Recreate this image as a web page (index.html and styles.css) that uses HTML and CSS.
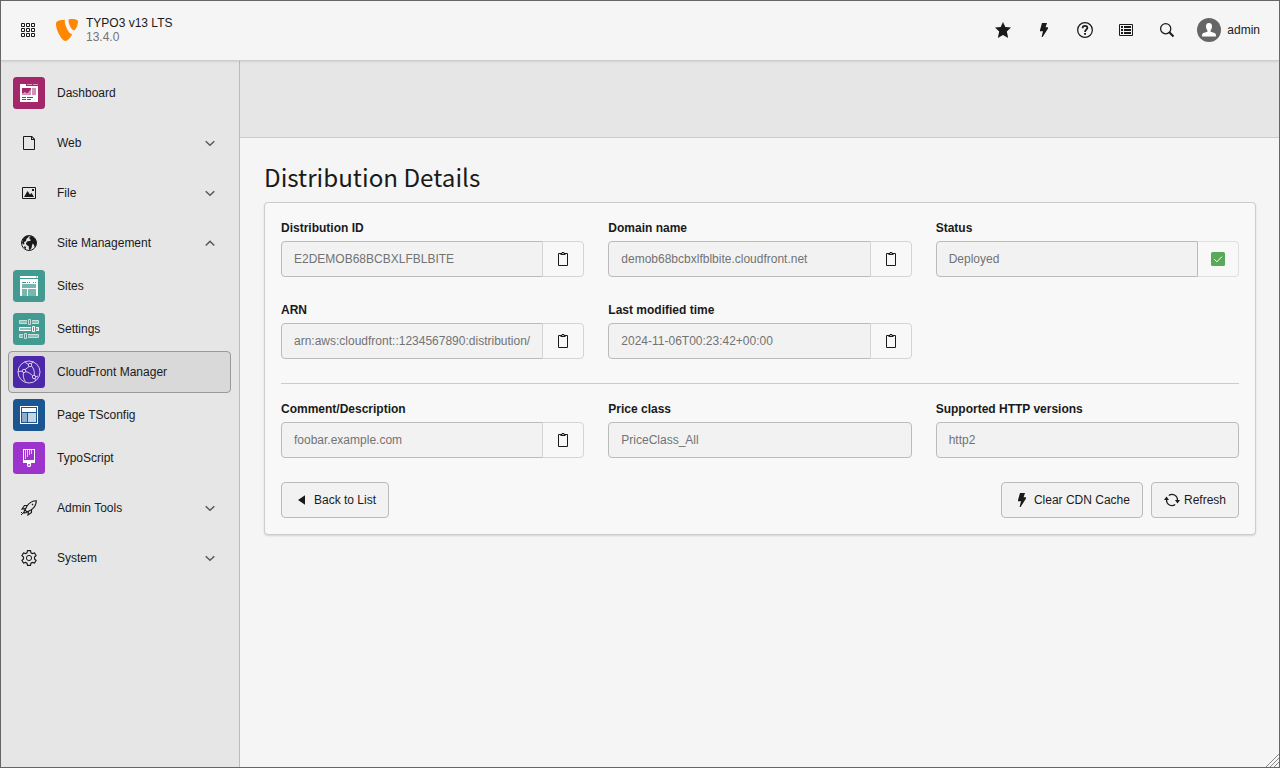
FILE: index.html
```html
<!DOCTYPE html>
<html lang="en">
<head>
<meta charset="utf-8">
<title>CloudFront Manager - TYPO3</title>
<link rel="stylesheet" href="styles.css">
</head>
<body>
<svg width="0" height="0" class="defs">
  <symbol id="down" viewBox="0 0 16 16"><path d="M3.700 6.200 8 10.300 12.300 6.200" fill="none" stroke="#5a5a5a" stroke-width="1.500"/></symbol>
  <symbol id="up" viewBox="0 0 16 16"><path d="M3.700 10.500 8 6.400 12.300 10.500" fill="none" stroke="#5a5a5a" stroke-width="1.500"/></symbol>
  <symbol id="bolt" viewBox="0 0 16 16"><path d="M6 1H11L9.600 5.200H12V6.400L6.600 15H5.600L7 9.200H4V8z"/></symbol>
  <symbol id="clip" viewBox="0 0 16 16"><path d="M3.500 2.500h9v12h-9z" fill="none" stroke="#1a1a1a"/><path d="M5 2h1.500L7 1h2l.5 1H11v1l-1 1H6L5 3z"/><path d="M7 2h2v1H7z" fill="#aaa"/></symbol>
</svg>
<div class="app">
  <header class="topbar">
    <svg class="grid-icon" viewBox="0 0 14 14" fill="none" stroke="#1a1a1a"><path d="M.5.5h3v3h-3zM5.500.5h3v3h-3zM10.500.5h3v3h-3zM.5 5.500h3v3h-3zM5.500 5.500h3v3h-3zM10.500 5.500h3v3h-3zM.5 10.500h3v3h-3zM5.500 10.500h3v3h-3zM10.500 10.500h3v3h-3z"/></svg>
    <svg class="logo" viewBox="2.1 1.8 12.1 12.6" preserveAspectRatio="none" fill="#ff8700"><path d="M11.100 10.300c-.2 0-.3.1-.5.1-1.500 0-3.700-5.300-3.700-7.100 0-.6.2-.9.3-1-1.900.1-4.100.4-4.800 1.200-.2.2-.3.8-.3 1.500 0 2.800 3 9.400 5.200 9.400 1 0 2.700-1.600 3.800-4.100zM10.200 1.800c2 0 4 .3 4 1.400 0 2.300-1.500 5.100-2.200 5.100-1.300 0-3-3.700-3-5.500 0-.8.3-1 1.200-1"/></svg>
    <div class="site"><span>TYPO3 v13 LTS</span><span class="version">13.4.0</span></div>
    <div class="tools">
      <svg class="icon" viewBox="0 0 16 16"><path d="m8 0 2.300 5.100L16 5.600l-4.200 4L13.200 16 8 13 2.800 16 4.200 9.600 0 5.600l5.700-.5z"/></svg>
      <svg class="icon"><use href="#bolt"/></svg>
      <svg class="icon" viewBox="0 0 16 16"><circle cx="8" cy="8" r="7.350" fill="none" stroke="#1a1a1a" stroke-width="1.250"/><path d="M5.600 6.200C5.600 4.600 6.600 3.900 8 3.900s2.400.8 2.400 2.100C10.400 7.500 8 7.600 8 9.900" fill="none" stroke="#1a1a1a" stroke-width="1.700"/><path d="M7.100 11h1.900v1.800H7.100z"/></svg>
      <svg class="icon" viewBox="0 0 16 16"><path d="M1.500 2.500h13v11h-13z" fill="none" stroke="#1a1a1a"/><path d="M3 4h2v2H3zM6 4h7v2H6zM3 7h2v2H3zM6 7h7v2H6zM3 10h2v2H3zM6 10h7v2H6z"/></svg>
      <svg class="icon" viewBox="0 0 16 16"><circle cx="6.700" cy="6.700" r="5.100" fill="none" stroke="#1a1a1a" stroke-width="1.250"/><path d="m10.300 10.300 4.200 4.200" stroke="#1a1a1a" stroke-width="2"/></svg>
      <div class="user">
        <svg class="avatar" viewBox="0 0 24 24"><circle cx="12" cy="12" r="12" fill="#666"/><path d="M12 5c2.200 0 3.200 1.500 3 3.600-.1 1.600-.6 2.900-1.400 3.600v1.500l4 1.400c1 .4 1.400 1.200 1.400 3.400H5c0-2.200.4-3 1.400-3.400l4-1.400v-1.500C9.600 11.500 9.100 10.200 9 8.600 8.800 6.500 9.800 5 12 5z" fill="#fff"/></svg>
        <span>admin</span>
      </div>
    </div>
  </header>
  <div class="body">
    <nav class="menu">
      <a class="item"><svg class="module" viewBox="0 0 32 32"><rect width="32" height="32" rx="3.500" fill="#a4276a"/><path d="M7 7h6v2h12v16H7z" fill="#fff"/><path d="M14 7h5v1h-5zM20 7h5v1h-5z" fill="#d99bbd"/><path d="M9 11h9v2l-3 3h-2l-1-.8-3 2zM9 20h4v1H9zM14 20h6v1h-6zM9 22h4v1H9zM14 22h4v1h-4z" fill="#a4276a"/><path d="M18 12v6H9v-1.500l3-1.300 1 .8h2zM19 11h4v7h-4z" fill="#d48fb5"/></svg><span>Dashboard</span></a>
      <a class="item group"><span class="slot"><svg class="icon" viewBox="0 0 16 16"><path d="M2.500 1.500h8l3 3v10h-11z" fill="none" stroke="#1a1a1a"/><path d="M10 1h1l3 3v1h-4z"/><path d="M11 2.500V4h1.500z" fill="#e6e6e6"/></svg></span><span>Web</span><svg class="icon chevron"><use href="#down"/></svg></a>
      <a class="item group"><span class="slot"><svg class="icon" viewBox="0 0 16 16"><path d="M1.500 2.500h13v11h-13z" fill="none" stroke="#1a1a1a"/><path d="m3 12 3.500-6L9 9.500 10.500 8 13 12zM11 4h2v2h-2z"/></svg></span><span>File</span><svg class="icon chevron"><use href="#down"/></svg></a>
      <a class="item group"><span class="slot"><svg class="icon" viewBox="0 0 16 16"><circle cx="8" cy="8" r="7.500" fill="none" stroke="#1a1a1a"/><path d="M2 3.500 5 1h3L7.200 2.500 5.500 3.800 5 6 3 7.300 3.500 9 2.500 9.500 1 8zM8.500 1.500 11 1l3 2.500L15.500 7l-.7 3.500-1.300 1.500-.8-2.500-1-1L11 10.500 10.500 13 9 15 8 14.500 7.700 11 5.500 10 5 8 6.500 6.300 9 6l1-1-1.500-1zM3.500 11l1.500 1v2L3 12.500z"/></svg></span><span>Site Management</span><svg class="icon chevron"><use href="#up"/></svg></a>
      <a class="item"><svg class="module" viewBox="0 0 32 32"><rect width="32" height="32" rx="3.500" fill="#439a90"/><path d="M7 6h18v2H7zM7 9h18v17H7z" fill="#fff"/><path d="M23 6.500h1v1h-1zM9 12h4v1H9zM14 12h1v1h-1zM16 12h1v1h-1zM20 12h1v1h-1zM22 12h1v1h-1z" fill="#439a90"/><path d="M9 14h14v4H9zM9 19h5v7H9zM15 19h8v7h-8z" fill="#78b7b0"/></svg><span>Sites</span></a>
      <a class="item"><svg class="module" viewBox="0 0 32 32"><rect width="32" height="32" rx="3.500" fill="#439a90"/><g fill="#8ec3bd" stroke="#c5dfdc"><path d="M6.500 7.500h19v3h-19zM6.500 21.500h19v3h-19z"/></g><path d="M6.500 14.500h19v3h-19z" fill="#8ec3bd" stroke="#fff"/><g fill="#439a90"><path d="M14 6h5v6h-5zM18 13h5v6h-5zM10 20h5v6h-5z"/></g><path d="M15.500 6.500h2v5h-2zM11.500 20.500h2v5h-2z" fill="none" stroke="#c5dfdc"/><path d="M19.500 13.500h2v5h-2z" fill="none" stroke="#fff"/></svg><span>Settings</span></a>
      <a class="item active"><svg class="module" viewBox="0 0 32 32"><rect width="32" height="32" rx="3.500" fill="#4d27aa"/><g fill="none" stroke="#e4ddf4" stroke-width=".9"><circle cx="16" cy="16" r="11"/><circle cx="17" cy="9" r="1.700"/><circle cx="11" cy="15" r="1.700"/><circle cx="21" cy="21" r="1.700"/><path d="M16 10.500 12 13.700M18.500 10c2.500 2.500 3.200 6 2.700 9.300M12.700 15.500c3 .8 5 2.300 7 4.300M10.500 16.700c-.8 3 .1 6 1.800 9M5 15.300h4.300M15.500 8.500 11.500 6M18 7.500 20.500 6M22 22.500l.5 2M22.700 21l2.300-1"/></g></svg><span>CloudFront Manager</span></a>
      <a class="item"><svg class="module" viewBox="0 0 32 32"><rect width="32" height="32" rx="3.500" fill="#1b5690"/><path d="M7 7h18v18H7z" fill="#fff"/><path d="M8 8h16v16H8z" fill="#1b5690"/><path d="M9 9h14v4H9z" fill="#fff"/><path d="M9 14h5v9H9z" fill="#8fadca"/><path d="M15 14h8v9h-8z" fill="#c6d5e4"/></svg><span>Page TSconfig</span></a>
      <a class="item"><svg class="module" viewBox="0 0 32 32"><rect width="32" height="32" rx="3.500" fill="#9b33cc"/><path d="M10 7h12v14h-4v3l-1 1h-2l-1-1v-3h-4z" fill="#fff"/><path d="M11 8h10v10H11zM15.200 22h1.600v1.800h-1.600z" fill="#9b33cc"/><path d="M12 8h1v9h-1zM14 8h1v7h-1zM16 8h1v5h-1zM18 8h1v4h-1z" fill="#e5c8f2"/></svg><span>TypoScript</span></a>
      <a class="item group"><span class="slot"><svg class="icon" viewBox="0 0 16 16" fill="none" stroke="#1a1a1a"><path stroke-width="1.150" d="M15.300.7C11 .7 8.500 2.500 6 6L4 10l2 2 4-2c3.500-2.500 5.300-5 5.300-9.300zM6 5.500H3.500L1 9l3.200-.4M10.500 10v2.500L7 15l.4-3.200M3.500 10 3 13l3-.5M11 4l1 1"/><path d="M0 12.500h1M1 13.500h1M0 14.500h1M2 12.500h1"/></svg></span><span>Admin Tools</span><svg class="icon chevron"><use href="#down"/></svg></a>
      <a class="item group"><span class="slot"><svg class="icon" viewBox="0 0 16 16" fill="none" stroke="#1a1a1a"><path stroke-width="1.150" d="M6.500.600h3l.5 2.200 1.300.8 2.200-.7 1.600 2.700-1.600 1.500v1.800l1.600 1.500-1.600 2.700-2.200-.7-1.300.8-.5 2.200h-3L6 13.200l-1.300-.8-2.200.7L.900 10.400l1.600-1.500V7.100L.900 5.600l1.600-2.700 2.200.7L6 2.800z"/><circle cx="8" cy="8" r="2.600"/></svg></span><span>System</span><svg class="icon chevron"><use href="#down"/></svg></a>
    </nav>
    <main class="content">
      <div class="docheader"></div>
      <section class="module-body">
        <h1>Distribution Details</h1>
        <div class="card">
          <div class="fields">
            <div><label>Distribution ID</label><div class="field"><div class="input">E2DEMOB68BCBXLFBLBITE</div><div class="addon"><svg class="icon"><use href="#clip"/></svg></div></div></div>
            <div><label>Domain name</label><div class="field"><div class="input">demob68bcbxlfblbite.cloudfront.net</div><div class="addon"><svg class="icon"><use href="#clip"/></svg></div></div></div>
            <div><label>Status</label><div class="field"><div class="input">Deployed</div><div class="addon status"><svg class="icon" viewBox="0 0 16 16"><rect x="1" y="1" width="14" height="14" rx="1.500" fill="#59a959"/><path d="m4.300 8.300 2.600 2.500 5-5.200" fill="none" stroke="#fff"/></svg></div></div></div>
            <div><label>ARN</label><div class="field"><div class="input">arn:aws:cloudfront::1234567890:distribution/</div><div class="addon"><svg class="icon"><use href="#clip"/></svg></div></div></div>
            <div><label>Last modified time</label><div class="field"><div class="input">2024-11-06T00:23:42+00:00</div><div class="addon"><svg class="icon"><use href="#clip"/></svg></div></div></div>
          </div>
          <div class="fields second">
            <div><label>Comment/Description</label><div class="field"><div class="input">foobar.example.com</div><div class="addon"><svg class="icon"><use href="#clip"/></svg></div></div></div>
            <div><label>Price class</label><div class="field"><div class="input">PriceClass_All</div></div></div>
            <div><label>Supported HTTP versions</label><div class="field"><div class="input">http2</div></div></div>
          </div>
          <div class="actions">
            <button class="back"><svg class="icon" viewBox="0 0 16 16"><path d="M11 3.200v9.600L4 8z"/></svg>Back to List</button>
            <button><svg class="icon"><use href="#bolt"/></svg>Clear CDN Cache</button>
            <button><svg class="icon" viewBox="0 0 16 16"><path d="M4.800 3.500A5.500 5.500 0 0 1 13.500 8M11.200 12.500A5.500 5.500 0 0 1 2.500 8" fill="none" stroke="#1a1a1a" stroke-width="1.200"/><path d="M11 8h5l-2.500 3.500zM0 8h5L2.500 4.500z"/></svg>Refresh</button>
          </div>
        </div>
      </section>
    </main>
  </div>
  <svg class="resizer" viewBox="0 0 13 13" fill="none" stroke="#888"><path d="M0 13 13 0M4 13l9-9M8 13l5-5"/></svg>
</div>
</body>
</html>
```
FILE: styles.css
```css
* { box-sizing: border-box; }
body { margin: 0; font: 12px/18px "Liberation Sans", Arial, sans-serif; color: #1a1a1a; }
svg { display: block; flex: none; }
.defs { position: absolute; }
.app { position: relative; height: 768px; display: flex; flex-direction: column; border: 1px solid #666; background: #f5f5f5; overflow: hidden; }
.icon { width: 16px; height: 16px; fill: #1a1a1a; }
.icon[fill="none"] { fill: none; }

.topbar { position: relative; height: 60px; flex: none; display: flex; align-items: center; padding: 0 19px 1px 20px; border-bottom: 1px solid #ccc; box-shadow: 0 1px 2px rgba(0, 0, 0, .09); }
.grid-icon { width: 14px; height: 14px; }
.logo { width: 22px; height: 22px; margin-left: 21px; }
.site { display: flex; flex-direction: column; margin-left: 8px; line-height: 14px; }
.version { color: #737373; }
.tools { margin-left: auto; display: flex; align-items: center; gap: 25px; }
.user { display: flex; align-items: center; gap: 6px; margin-left: -3px; }
.avatar { width: 24px; height: 24px; }

.body { flex: 1; display: flex; min-height: 0; }
.menu { width: 239px; flex: none; display: flex; flex-direction: column; gap: 1px; padding: 11px 8px 0 7px; border-right: 1px solid #bbb; background: #e6e6e6; }
.item { height: 42px; flex: none; display: flex; align-items: center; gap: 12px; padding: 0 12px 0 4px; border: 1px solid transparent; border-radius: 4px; }
.item.group { margin-top: 7px; }
.item:not(.group) + .item.group { margin-top: 7px; }
.item.active { background: #d9d9d9; border-color: #999; }
.module { width: 32px; height: 32px; }
.slot { width: 32px; display: flex; justify-content: center; }
.chevron { margin-left: auto; }

.content { flex: 1; min-width: 0; }
.docheader { height: 77px; background: #e6e6e6; border-bottom: 1px solid #ccc; }
.module-body { padding: 23px 23px 0 24px; }
h1 { margin: 0 0 9px; font: 400 24.2px/32px "Noto Sans CJK SC", sans-serif; }
.card { padding: 16px; border: 1px solid #ccc; border-radius: 4px; background: #f8f8f8; box-shadow: 0 1px 2px rgba(0, 0, 0, .14); }
.fields { display: grid; grid-template-columns: repeat(3, minmax(0, 1fr)); gap: 24px; }
.second { margin-top: 24px; padding-top: 16px; border-top: 1px solid #ccc; }
label { display: block; margin-bottom: 4px; font-weight: 700; }
.field { display: flex; height: 36px; }
.input { flex: 1; min-width: 0; padding: 8px 12px; border: 1px solid #bbb; border-radius: 4px; background: #f2f2f2; color: #737373; white-space: nowrap; overflow: hidden; }
.input:not(:last-child) { border-radius: 4px 0 0 4px; }
.addon { width: 42px; margin-left: -1px; position: relative; display: flex; align-items: center; justify-content: center; border: 1px solid #d4d4d4; border-radius: 0 4px 4px 0; background: #f8f8f8; }
.status { border-color: #e0e0e0; border-left-color: #bbb; }
.actions { display: flex; gap: 8px; margin-top: 24px; }
.back { margin-right: auto; }
button { display: flex; align-items: center; gap: 4px; height: 36px; padding: 0 12px; border: 1px solid #bbb; border-radius: 4px; background: #f2f2f2; color: #1a1a1a; font: inherit; }
.resizer { position: absolute; right: 0; bottom: 0; width: 13px; height: 13px; }
```
